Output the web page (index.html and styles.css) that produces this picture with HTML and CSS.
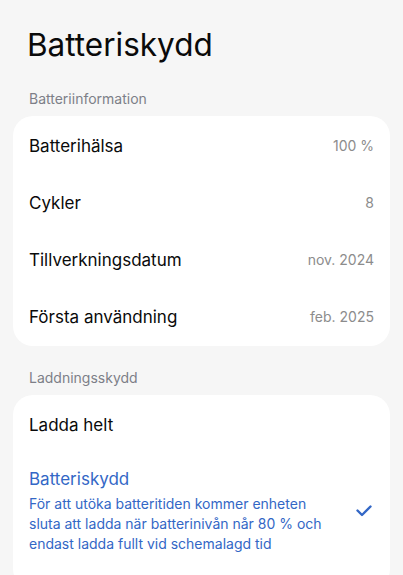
FILE: index.html
```html
<!DOCTYPE html>
<html lang="sv">
<head>
    <meta charset="UTF-8">
    <meta name="viewport" content="width=device-width, initial-scale=1.0">
    <title>Batteriskydd</title>
    <link rel="stylesheet" href="styles.css">
</head>
<body>
    <h1 class="page-title">Batteriskydd</h1>

    <div class="section-title">Batteriinformation</div>
    <div class="card">
        <div class="info-row">
            <span class="label">Batterihälsa</span>
            <span class="value">100 %</span>
        </div>
        <div class="info-row">
            <span class="label">Cykler</span>
            <span class="value">8</span>
        </div>
        <div class="info-row">
            <span class="label">Tillverkningsdatum</span>
            <span class="value">nov. 2024</span>
        </div>
        <div class="info-row">
            <span class="label">Första användning</span>
            <span class="value">feb. 2025</span>
        </div>
    </div>

    <div class="section-title">Laddningsskydd</div>
    <div class="card card-options">
        <div class="option">
            <div class="option-text">
                <span class="label">Ladda helt</span>
            </div>
        </div>
        <div class="option selected">
            <div class="option-text">
                <span class="label">Batteriskydd</span>
                <span class="desc">För att utöka batteritiden kommer enheten sluta att ladda när batterinivån når 80 % och endast ladda fullt vid schemalagd tid</span>
            </div>
            <svg class="check" width="16" height="12" viewBox="0 0 16 12" fill="none" stroke="currentColor" stroke-width="2.4" stroke-linecap="round" stroke-linejoin="round">
                <polyline points="1.5 5.5 6 10 14.5 1.5"></polyline>
            </svg>
        </div>
    </div>
</body>
</html>
```

FILE: styles.css
```css
:root {
    --bg: #f6f6f6;
    --card: #ffffff;
    --text: #0a0a0a;
    --muted: #7d7f88;
    --value: #8c8c8c;
    --accent: #3367c6;
    --radius: 20px;
}

body {
    margin: 0;
    background-color: var(--bg);
    color: var(--text);
    font-family: Inter, Roboto, "Noto Sans", sans-serif;
}

.page-title {
    margin: 0;
    padding: 25px 27px 0;
    font-size: 31.5px;
    font-weight: 400;
    line-height: 40px;
}

.section-title {
    padding: 0 29px;
    margin-top: 24px;
    height: 27px;
    line-height: 20px;
    font-size: 14px;
    color: var(--muted);
}

.card {
    margin: 0 13px;
    padding: 1px 16px;
    background-color: var(--card);
    border-radius: var(--radius);
}

.card-options {
    padding-bottom: 20px;
}

.card + .section-title {
    margin-top: 22px;
}

.info-row {
    display: flex;
    align-items: center;
    justify-content: space-between;
    height: 57px;
}

.label {
    font-size: 17px;
    line-height: 22px;
}

.value {
    font-size: 14px;
    color: var(--value);
}

.option {
    display: flex;
    align-items: center;
    gap: 16px;
    min-height: 57px;
}

.option-text {
    flex: 1;
    display: flex;
    flex-direction: column;
}

.option.selected {
    padding: 15px 0;
    color: var(--accent);
}

.desc {
    font-size: 14px;
    line-height: 20px;
    margin-top: 4px;
}

.check {
    flex: none;
    margin-right: 2px;
}
```
